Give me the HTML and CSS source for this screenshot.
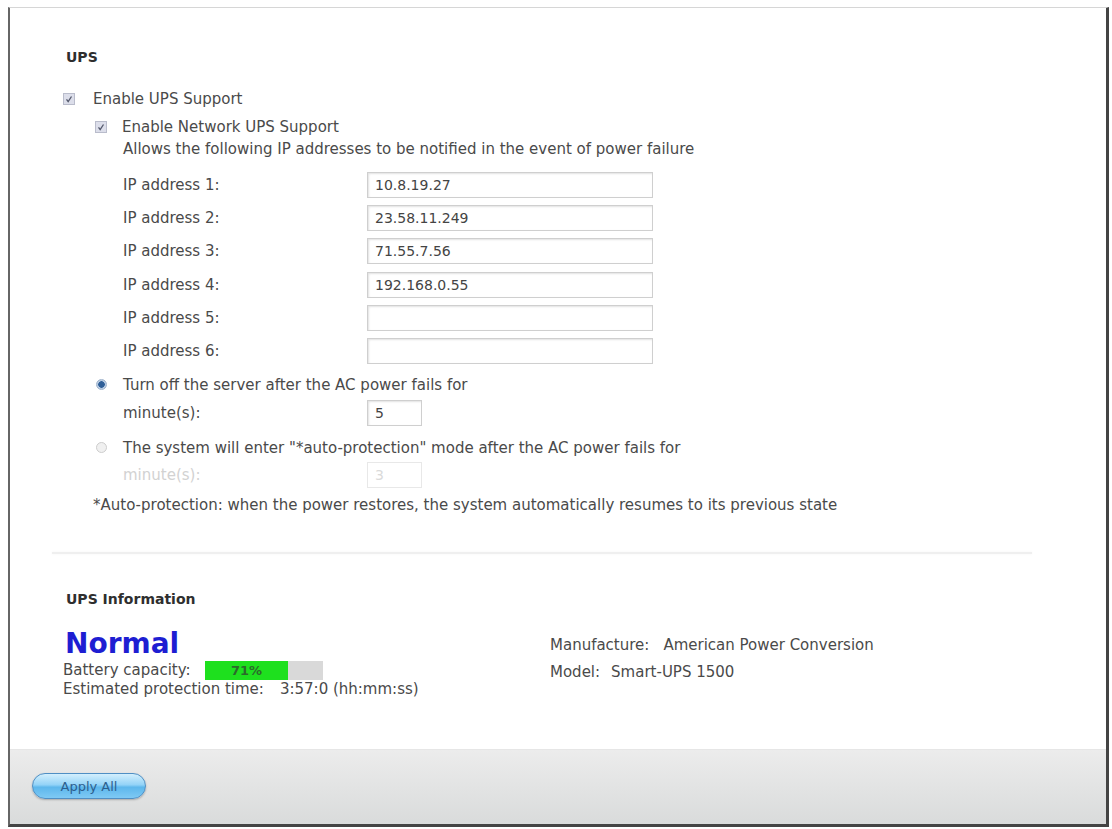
FILE: index.html
```html
<!DOCTYPE html>
<html>
<head>
<meta charset="utf-8">
<link rel="stylesheet" href="styles.css">
</head>
<body>
<div class="frame">
  <div class="content">
    <div class="heading h-ups">UPS</div>
    <div class="line l-enable"><span class="cb"><svg viewBox="0 0 12 12"><path d="M3 6.5 L5 9 L9 3" /></svg></span><span>Enable UPS Support</span></div>
    <div class="sub">
      <div class="line l-net"><span class="cb"><svg viewBox="0 0 12 12"><path d="M3 6.5 L5 9 L9 3" /></svg></span><span>Enable Network UPS Support</span></div>
      <div class="indent">
        <div class="line l-allow">Allows the following IP addresses to be notified in the event of power failure</div>
        <div class="ips">
          <div class="iprow"><span class="lbl">IP address 1:</span><span class="inp">10.8.19.27</span></div>
          <div class="iprow"><span class="lbl">IP address 2:</span><span class="inp">23.58.11.249</span></div>
          <div class="iprow"><span class="lbl">IP address 3:</span><span class="inp">71.55.7.56</span></div>
          <div class="iprow"><span class="lbl">IP address 4:</span><span class="inp">192.168.0.55</span></div>
          <div class="iprow"><span class="lbl">IP address 5:</span><span class="inp"></span></div>
          <div class="iprow"><span class="lbl">IP address 6:</span><span class="inp"></span></div>
        </div>
      </div>
      <div class="line l-r1"><span class="rd on"></span><span>Turn off the server after the AC power fails for</span></div>
      <div class="minrow m1"><span class="lbl">minute(s):</span><span class="inp small">5</span></div>
      <div class="line l-r2"><span class="rd"></span><span>The system will enter "*auto-protection" mode after the AC power fails for</span></div>
      <div class="minrow m2 disabled"><span class="lbl">minute(s):</span><span class="inp small">3</span></div>
    </div>
    <div class="line l-note">*Auto-protection: when the power restores, the system automatically resumes to its previous state</div>
    <div class="divider"></div>
    <div class="heading h-info">UPS Information</div>
    <div class="info">
      <div class="info-left">
        <div class="status">Normal</div>
        <div class="batt"><span>Battery capacity:</span><span class="bar"><span class="fill" style="width:71%"></span><span class="pct">71%</span></span></div>
        <div class="est"><span>Estimated protection time:</span><span class="val">3:57:0 (hh:mm:ss)</span></div>
      </div>
      <div class="info-right">
        <div class="kv"><span>Manufacture:</span><span class="val">American Power Conversion</span></div>
        <div class="kv kv-model"><span>Model:</span><span class="val">Smart-UPS 1500</span></div>
      </div>
    </div>
  </div>
  <div class="footer">
    <button class="apply">Apply All</button>
  </div>
</div>
</body>
</html>
```
FILE: styles.css
```css
html, body { margin: 0; padding: 0; background: #fff; }
body {
  font-family: "DejaVu Sans", Verdana, sans-serif;
  font-size: 15px;
  color: #4a4a4a;
  width: 1112px;
  height: 829px;
  overflow: hidden;
}
.frame {
  margin: 7px 0 0 8px;
  width: 1101px;
  height: 820px;
  border-top: 1px solid #d6d6d6;
  border-left: 2px solid #666;
  border-right: 3px solid #444;
  border-bottom: 3px solid #444;
  display: flex;
  flex-direction: column;
  box-sizing: border-box;
}
.content {
  flex: 1;
  padding: 39px 0 0 56px;
  box-sizing: border-box;
}
.heading {
  font-weight: bold;
  font-size: 14px;
  color: #2e2e2e;
  height: 20px;
  line-height: 20px;
}
.line {
  display: flex;
  align-items: center;
  height: 20px;
  line-height: 20px;
  white-space: nowrap;
}
.l-enable { margin-top: 22px; margin-left: -3px; }
.cb {
  width: 12px; height: 12px;
  background: #dcdeea;
  border: 1px solid #b9bccb;
  box-sizing: border-box;
  margin-right: 18px;
  display: inline-flex;
}
.cb svg { width: 10px; height: 10px; fill: none; stroke: #555a6e; stroke-width: 1.6; }
.sub { padding-left: 29px; }
.l-net { margin-top: 8px; }
.l-net .cb { margin-right: 15px; }
.indent { padding-left: 28px; }
.l-allow { margin-top: 2px; }
.ips { margin-top: 13px; display: flex; flex-direction: column; gap: 7.2px; }
.iprow, .minrow {
  display: grid;
  grid-template-columns: 244px auto;
  align-items: center;
  height: 26px;
}
.inp {
  display: block;
  width: 286px;
  height: 26px;
  box-sizing: border-box;
  border: 1px solid #cfcfcf;
  box-shadow: inset 1px 1px 2px #e2e2e2;
  background: #fff;
  padding-left: 7px;
  line-height: 24px;
  font-size: 14px;
  color: #444;
}
.inp.small { width: 55px; }
.rd {
  width: 11px; height: 11px;
  border-radius: 50%;
  border: 1px solid #cdcdcd;
  background: #f0f0f0;
  box-sizing: border-box;
  margin: 0 16px 0 1px;
}
.rd.on {
  background: radial-gradient(circle, #2f5f98 0 3px, #b8cbe2 3.5px);
  border-color: #9fb3cc;
}
.l-r1 { margin-top: 11px; }
.minrow { margin-left: 28px; }
.m1 { margin-top: 5px; }
.l-r2 { margin-top: 12px; }
.m2 { margin-top: 4px; }
.disabled { color: #d2d2d2; }
.disabled .inp { color: #dadada; border-color: #e8e8e8; box-shadow: none; }
.l-note { margin-top: 7px; margin-left: 27px; }
.divider {
  margin: 37px 0 0 -14px;
  width: 980px;
  height: 2px;
  background: #efefef;
  box-shadow: 0 0 3px #f4f4f4;
}
.h-info { margin-top: 35px; }
.info {
  display: flex;
  margin-top: 21px;
}
.info-left { width: 487px; margin-left: -3px; }
.status {
  font-size: 28px;
  font-weight: bold;
  color: #1e1ed2;
  line-height: 28px;
  height: 28px;
  margin-left: 2px;
}
.batt, .est { display: flex; align-items: center; height: 19px; white-space: nowrap; }
.batt { margin-top: 3px; }
.bar {
  position: relative;
  width: 118px;
  height: 19px;
  background: #d9d9d9;
  margin-left: 14px;
  display: inline-block;
}
.fill { position: absolute; left: 0; top: 0; bottom: 0; background: #1ee01e; }
.pct {
  position: absolute; left: 0; width: 71%; top: 0;
  text-align: center; line-height: 19px; font-weight: bold; color: #2b6a2b; font-size: 13px;
}
.est .val { margin-left: 16px; }
.info-right { padding-top: 2px; }
.kv { height: 27px; line-height: 27px; white-space: nowrap; }
.kv .val { margin-left: 14px; }
.kv-model .val { margin-left: 11px; }
.footer {
  height: 75px;
  border-top: 1px solid #e6e6e6;
  background: linear-gradient(#ececec, #d9dbdb);
  padding: 23px 0 0 22px;
  box-sizing: border-box;
}
.apply {
  width: 114px;
  height: 26px;
  border-radius: 13px;
  border: 1px solid #4f8fc4;
  background: linear-gradient(#d3effd, #93d3f7 45%, #5db7ec 55%, #7ec9f4);
  color: #2d5f8e;
  font-family: "DejaVu Sans", Verdana, sans-serif;
  font-size: 13px;
  padding: 0;
  box-shadow: 0 1px 2px rgba(0,0,0,0.25);
}
```
